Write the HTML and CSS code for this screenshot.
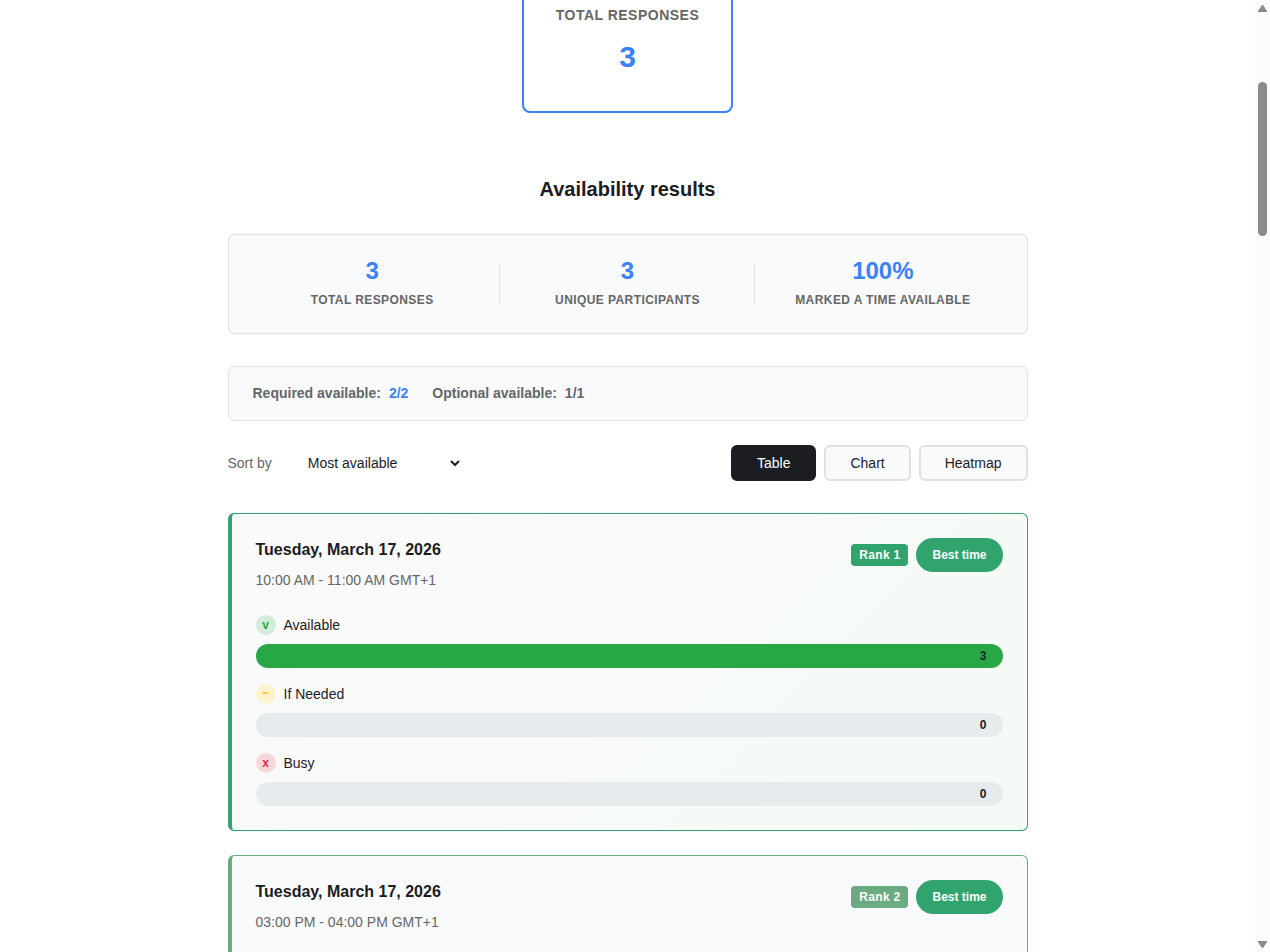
FILE: index.html
```html
<!DOCTYPE html>
<html lang="en">
<head>
<meta charset="utf-8">
<title>Availability results</title>
<link rel="stylesheet" href="styles.css">
</head>
<body>
<main class="page">
  <div class="content">
    <section class="total">
      <p class="total-label">TOTAL RESPONSES</p>
      <p class="total-value">3</p>
    </section>

    <h2 class="heading">Availability results</h2>

    <section class="stats">
      <div class="stat"><span class="stat-value">3</span><span class="stat-label">TOTAL RESPONSES</span></div>
      <div class="stat"><span class="stat-value">3</span><span class="stat-label">UNIQUE PARTICIPANTS</span></div>
      <div class="stat"><span class="stat-value">100%</span><span class="stat-label">MARKED A TIME AVAILABLE</span></div>
    </section>

    <section class="coverage">
      <p class="coverage-item"><span>Required available:</span><span class="accent">2/2</span></p>
      <p class="coverage-item"><span>Optional available:</span><span>1/1</span></p>
    </section>

    <div class="toolbar">
      <div class="sort">
        <label class="sort-label" for="sort">Sort by</label>
        <select class="sort-select" id="sort"><option>Most available</option></select>
      </div>
      <div class="views">
        <button type="button" class="view view-active">Table</button>
        <button type="button" class="view">Chart</button>
        <button type="button" class="view">Heatmap</button>
      </div>
    </div>

    <article class="slot slot-first">
      <header class="slot-header">
        <div>
          <h3 class="slot-date">Tuesday, March 17, 2026</h3>
          <p class="slot-time">10:00 AM - 11:00 AM GMT+1</p>
        </div>
        <div class="badges"><span class="rank">Rank 1</span><span class="best">Best time</span></div>
      </header>
      <div class="votes">
        <div class="vote">
          <div class="vote-label"><span class="mark mark-yes">v</span>Available</div>
          <div class="bar bar-full"><span class="bar-count">3</span></div>
        </div>
        <div class="vote">
          <div class="vote-label"><span class="mark mark-maybe">~</span>If Needed</div>
          <div class="bar"><span class="bar-count">0</span></div>
        </div>
        <div class="vote">
          <div class="vote-label"><span class="mark mark-no">x</span>Busy</div>
          <div class="bar"><span class="bar-count">0</span></div>
        </div>
      </div>
    </article>

    <article class="slot slot-second">
      <header class="slot-header">
        <div>
          <h3 class="slot-date">Tuesday, March 17, 2026</h3>
          <p class="slot-time">03:00 PM - 04:00 PM GMT+1</p>
        </div>
        <div class="badges"><span class="rank">Rank 2</span><span class="best">Best time</span></div>
      </header>
    </article>
  </div>
</main>
<div class="scrollbar" aria-hidden="true">
  <svg class="scroll-arrow" viewBox="0 0 9 7"><path d="M4 0h1l4 6v1H0V6z"/></svg>
  <div class="scroll-track"><div class="scroll-thumb"></div></div>
  <svg class="scroll-arrow" viewBox="0 0 9 7"><path d="M0 0h9v1L5 7H4L0 1z"/></svg>
</div>
</body>
</html>
```
FILE: styles.css
```css
* { box-sizing: border-box; }

body {
  margin: 0;
  height: 100vh;
  display: flex;
  overflow: hidden;
  background: #fff;
  color: #1c1c1f;
  font: 14px/21px "Liberation Sans", Arial, sans-serif;
}

h2, h3, p { margin: 0; }

.page { flex: 1; min-width: 0; overflow: hidden; }

.content {
  max-width: 800px;
  margin: -29px auto 0;
  display: flex;
  flex-direction: column;
}

.total {
  align-self: center;
  padding: 32px;
  border: 2px solid #3b82f6;
  border-radius: 8px;
  text-align: center;
}

.total-label {
  margin-bottom: 8px;
  color: #666;
  font-weight: bold;
  letter-spacing: 0.035em;
}

.total-value {
  color: #3b82f6;
  font-size: 30px;
  line-height: 45px;
  font-weight: bold;
}

.heading {
  margin: 63px 0 32px;
  font-size: 20px;
  line-height: 26px;
  text-align: center;
}

.stats, .coverage {
  background: #f9fafc;
  border: 1px solid #dee2e6;
  border-radius: 6px;
}

.stats {
  display: grid;
  grid-template-columns: repeat(3, 1fr);
  padding: 24px 16px;
}

.stat {
  position: relative;
  display: flex;
  flex-direction: column;
  align-items: center;
  gap: 8px;
}

.stat:not(:last-child)::after {
  content: "";
  position: absolute;
  right: 0;
  top: 5px;
  bottom: 5px;
  width: 1px;
  background: #dee2e6;
}

.stat-value {
  color: #3b82f6;
  font-size: 24px;
  line-height: 24px;
  font-weight: bold;
}

.stat-label {
  color: #666;
  font-size: 12px;
  line-height: 18px;
  font-weight: bold;
  letter-spacing: 0.035em;
}

.coverage {
  display: flex;
  gap: 24px;
  margin-top: 32px;
  padding: 16px 24px;
  color: #666;
  font-weight: bold;
}

.coverage-item { display: flex; gap: 8px; }

.accent { color: #3b82f6; }

.toolbar {
  display: flex;
  justify-content: space-between;
  align-items: center;
  margin: 24px 0 32px;
}

.sort { display: flex; align-items: center; gap: 16px; }

.sort-label { color: #666; }

.sort-select {
  width: 175px;
  height: 36px;
  padding: 0 16px;
  border: 0;
  background: #fff;
  color: #1c1c1f;
  font: inherit;
}

.views { display: flex; gap: 8px; }

.view {
  padding: 8px 24px;
  border: 2px solid #dee2e6;
  border-radius: 6px;
  background: #f9fafc;
  color: #1c1c1f;
  font: inherit;
  line-height: 16px;
}

.view-active {
  border-color: #1c1d22;
  background: #1c1d22;
  color: #fff;
}

.slot {
  margin-bottom: 24px;
  padding: 24px;
  border: 1px solid;
  border-left-width: 4px;
  border-radius: 6px;
}

.slot-first {
  border-color: #31a36d;
  background: linear-gradient(135deg, #fafafa, #f4faf6);
}

.slot-second {
  min-height: 318px;
  border-color: #6aab82;
  background: #f9fafc;
}

.slot-header {
  display: flex;
  justify-content: space-between;
  align-items: flex-start;
}

.slot-date {
  margin-bottom: 8px;
  font-size: 16px;
  line-height: 24px;
}

.slot-time { color: #666; }

.badges {
  display: flex;
  align-items: center;
  gap: 8px;
  color: #fff;
  font-size: 12px;
  line-height: 18px;
  font-weight: bold;
}

.rank {
  padding: 2px 8px;
  border-radius: 4px;
  background: #31a36d;
  letter-spacing: 0.025em;
}

.slot-second .rank { background: #6aab82; }

.best {
  padding: 8px 16px;
  border-radius: 20px;
  background: #31a36d;
}

.votes {
  display: grid;
  gap: 16px;
  margin-top: 24px;
}

.vote-label {
  display: flex;
  align-items: flex-start;
  gap: 8px;
  margin-bottom: 8px;
}

.mark {
  width: 20px;
  height: 20px;
  border-radius: 50%;
  font-size: 12px;
  line-height: 20px;
  font-weight: bold;
  text-align: center;
}

.mark-yes { background: #d4edda; color: #28a745; }
.mark-maybe { background: #fff3cd; color: #ffc107; }
.mark-no { background: #f8d7da; color: #dc3545; }

.bar {
  display: flex;
  justify-content: flex-end;
  padding: 0 16px;
  border-radius: 12px;
  background: #e8ebee;
  font-size: 12px;
  line-height: 24px;
  font-weight: bold;
}

.bar-full { background: #28a745; }
.bar-full .bar-count { opacity: 0.9; }

.scrollbar {
  width: 15px;
  padding: 5px 3px 4px;
  display: flex;
  flex-direction: column;
  align-items: center;
  background: #fcfcfc;
}

.scroll-arrow {
  flex: none;
  width: 9px;
  height: 7px;
  fill: #8b8b8b;
}

.scroll-track { flex: 1; padding-top: 70px; }

.scroll-thumb {
  width: 9px;
  height: 154px;
  border-radius: 5px;
  background: #8b8b8b;
}
```
